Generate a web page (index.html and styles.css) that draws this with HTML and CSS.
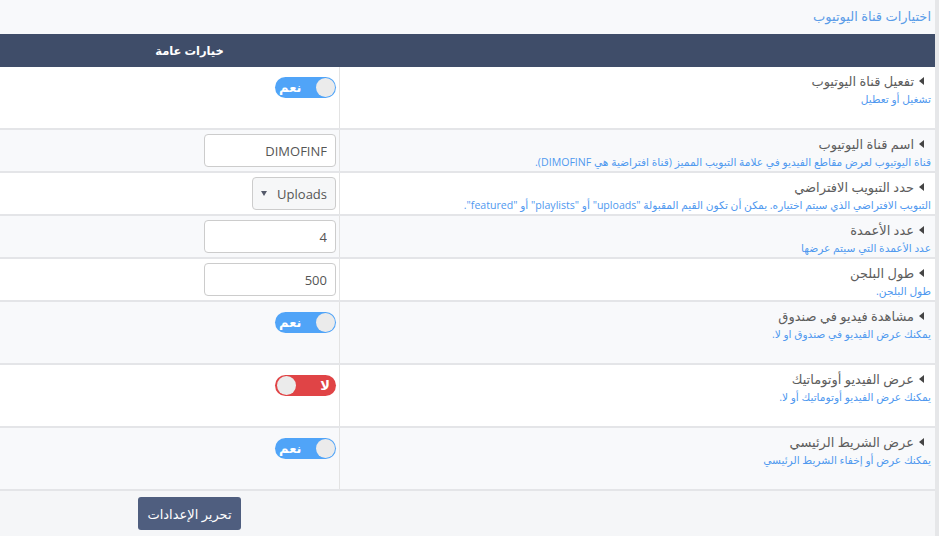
FILE: index.html
```html
<!DOCTYPE html>
<html lang="ar" dir="rtl">
<head>
  <meta charset="UTF-8">
  <meta name="viewport" content="width=device-width, initial-scale=1.0">
  <title>اختيارات قناة اليوتيوب</title>
  <link rel="stylesheet" href="styles.css">
</head>
<body>
  <div class="page">
    <div class="title">اختيارات قناة اليوتيوب</div>

    <div class="bar head">
      <div class="bar-side"></div>
      <div class="bar-main">خيارات عامة</div>
    </div>

    <div class="row tall">
      <div class="info">
        <div class="label">تفعيل قناة اليوتيوب</div>
        <div class="desc">تشغيل أو تعطيل</div>
      </div>
      <div class="ctrl">
        <span class="switch on"><span class="knob"></span><span class="switch-text">نعم</span></span>
      </div>
    </div>

    <div class="row alt">
      <div class="info">
        <div class="label">اسم قناة اليوتيوب</div>
        <div class="desc">قناة اليوتيوب لعرض مقاطع الفيديو في علامة التبويب المميز (قناة افتراضية هي DIMOFINF).</div>
      </div>
      <div class="ctrl">
        <input class="field" type="text" value="DIMOFINF">
      </div>
    </div>

    <div class="row">
      <div class="info">
        <div class="label">حدد التبويب الافتراضي</div>
        <div class="desc">التبويب الافتراضي الذي سيتم اختياره. يمكن أن تكون القيم المقبولة "uploads" أو "playlists" أو "featured".</div>
      </div>
      <div class="ctrl">
        <div class="select"><span>Uploads</span><span class="caret"></span></div>
      </div>
    </div>

    <div class="row alt">
      <div class="info">
        <div class="label">عدد الأعمدة</div>
        <div class="desc">عدد الأعمدة التي سيتم عرضها</div>
      </div>
      <div class="ctrl">
        <input class="field" type="text" value="4">
      </div>
    </div>

    <div class="row">
      <div class="info">
        <div class="label">طول البلجن</div>
        <div class="desc">طول البلجن.</div>
      </div>
      <div class="ctrl">
        <input class="field" type="text" value="500">
      </div>
    </div>

    <div class="row alt tall">
      <div class="info">
        <div class="label">مشاهدة فيديو في صندوق</div>
        <div class="desc">يمكنك عرض الفيديو في صندوق او لا.</div>
      </div>
      <div class="ctrl">
        <span class="switch on"><span class="knob"></span><span class="switch-text">نعم</span></span>
      </div>
    </div>

    <div class="row tall">
      <div class="info">
        <div class="label">عرض الفيديو أوتوماتيك</div>
        <div class="desc">يمكنك عرض الفيديو أوتوماتيك أو لا.</div>
      </div>
      <div class="ctrl">
        <span class="switch off"><span class="knob"></span><span class="switch-text">لا</span></span>
      </div>
    </div>

    <div class="row alt tall">
      <div class="info">
        <div class="label">عرض الشريط الرئيسي</div>
        <div class="desc">يمكنك عرض أو إخفاء الشريط الرئيسي</div>
      </div>
      <div class="ctrl">
        <span class="switch on"><span class="knob"></span><span class="switch-text">نعم</span></span>
      </div>
    </div>

    <div class="bar foot">
      <div class="bar-side"></div>
      <div class="bar-main">
        <button class="btn" type="button">تحرير الإعدادات</button>
      </div>
    </div>
  </div>
</body>
</html>
```

FILE: styles.css
```css
* {
  box-sizing: border-box;
}

html, body {
  margin: 0;
  height: 100%;
}

body {
  background-color: #e6e7e9;
  font-family: "Open Sans", "DejaVu Sans", sans-serif;
  font-size: 13px;
  color: #555;
  overflow: hidden;
}

/* the page sits on the left, the grey strip on the right */
.page {
  width: 935px;
  min-height: 100%;
  margin-right: auto;
  background-color: #f5f6f8;
}

.title {
  height: 34px;
  line-height: 32px;
  padding-right: 4px;
  background-color: #f8f9fb;
  color: #5a9ce8;
  font-size: 13px;
}

.bar {
  display: flex;
}

.bar-side {
  width: 596px;
}

.bar-main {
  flex: 1;
  text-align: center;
  padding-left: 40px;
}

.head {
  height: 33px;
  line-height: 33px;
  background-color: #3f4d69;
  color: #fff;
  font-size: 11.5px;
  font-weight: bold;
}

.foot {
  padding-top: 6px;
}

.btn {
  width: 103px;
  height: 33px;
  border: 0;
  border-radius: 3px;
  background-color: #4f5e7f;
  color: #fff;
  font-family: inherit;
  font-size: 13px;
  cursor: pointer;
}

.row {
  display: flex;
  background-color: #fff;
  border-bottom: 2px solid #e4e5e8;
}

.row.alt {
  background-color: #f8f9fb;
}

.row.tall {
  min-height: 63px;
}

.info {
  width: 596px;
  padding: 4px 4px 0 8px;
  border-left: 1px solid #e3e3e3;
}

.label {
  padding-right: 7px;
  line-height: 20px;
  font-size: 13px;
  color: #5d5d5d;
}

.label::before {
  content: "";
  display: inline-block;
  border-top: 4px solid transparent;
  border-bottom: 4px solid transparent;
  border-right: 5px solid #444;
  margin-left: 5px;
  vertical-align: 1px;
}

.desc {
  line-height: 16px;
  font-size: 10.6px;
  color: #5099ef;
}

.ctrl {
  flex: 1;
  padding: 4px 3px 4px 0;
}

.row.tall .ctrl {
  padding-top: 10px;
}

.field {
  display: block;
  width: 132px;
  height: 33px;
  border: 1px solid #ccc;
  border-radius: 4px;
  padding: 0 8px;
  background-color: #fff;
  font-family: "Open Sans", sans-serif;
  font-size: 13px;
  color: #555;
  text-align: right;
}

.select {
  display: flex;
  align-items: center;
  justify-content: space-between;
  width: 84px;
  height: 33px;
  border: 1px solid #ccc;
  border-radius: 4px;
  padding: 0 8px;
  background-color: #f6f7f8;
  font-size: 13px;
  color: #555;
}

.caret {
  border-left: 3px solid transparent;
  border-right: 3px solid transparent;
  border-top: 5px solid #555a6a;
}

.switch {
  display: flex;
  align-items: center;
  justify-content: space-between;
  width: 61px;
  height: 21px;
  border-radius: 11px;
  padding: 0 1px 0 4px;
}

.switch.on {
  background-color: #50a4f8;
}

.switch.off {
  flex-direction: row-reverse;
  background-color: #e04446;
  padding: 0 6px 0 2px;
}

.knob {
  width: 19px;
  height: 19px;
  border-radius: 50%;
  background-color: #ebebeb;
}

.switch-text {
  color: #fff;
  font-size: 13px;
  font-weight: bold;
  line-height: 21px;
}
```
